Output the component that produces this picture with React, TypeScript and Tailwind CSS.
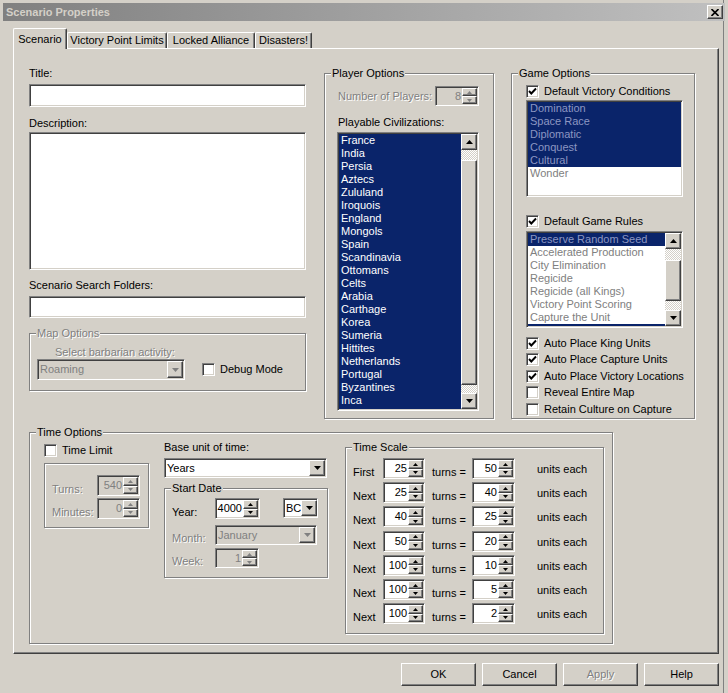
import React from 'react';

// classic win2k bevels
const SUNKEN =
  'border border-t-[#808080] border-l-[#808080] border-b-white border-r-white shadow-[inset_1px_1px_0_#404040,inset_-1px_-1px_0_#d4d0c8]';
const RAISED =
  'border border-t-white border-l-white border-b-[#404040] border-r-[#404040] shadow-[inset_-1px_-1px_0_#808080]';
const ETCHED = 'border border-[#808080] shadow-[inset_1px_1px_0_#fff,1px_1px_0_#fff]';
const DIS = 'text-[#808080] [text-shadow:1px_1px_0_#fff]';
const DITHER = 'bg-[repeating-conic-gradient(#fff_0%_25%,#d4d0c8_0%_50%)] bg-[length:2px_2px]';

function Arrow({ dir, big, disabled }: { dir: 'up' | 'down'; big?: boolean; disabled?: boolean }) {
  const fill = disabled ? '#808080' : '#000';
  if (big) {
    return (
      <svg width="7" height="4" viewBox="0 0 7 4">
        <path d={dir === 'up' ? 'M0 4 L3.5 0 L7 4Z' : 'M0 0 L7 0 L3.5 4Z'} fill={fill} />
      </svg>
    );
  }
  return (
    <svg width="5" height="3" viewBox="0 0 5 3">
      <path d={dir === 'up' ? 'M0 3 L2.5 0 L5 3Z' : 'M0 0 L5 0 L2.5 3Z'} fill={fill} />
    </svg>
  );
}

function Spin({ value, className, disabled }: { value: string; className: string; disabled?: boolean }) {
  return (
    <div className={`${SUNKEN} ${className} flex p-[1px] ${disabled ? 'bg-[#d4d0c8]' : 'bg-white'}`}>
      <span className={`flex-1 self-center text-right pr-[1px] ${disabled ? 'text-[#808080]' : ''}`}>{value}</span>
      <div className="flex flex-col w-[15px]">
        <div className={`flex-1 ${RAISED} bg-[#d4d0c8] flex items-center justify-center`}>
          <Arrow dir="up" disabled={disabled} />
        </div>
        <div className={`flex-1 ${RAISED} bg-[#d4d0c8] flex items-center justify-center`}>
          <Arrow dir="down" disabled={disabled} />
        </div>
      </div>
    </div>
  );
}

function Combo({ value, className, disabled }: { value: string; className: string; disabled?: boolean }) {
  return (
    <div className={`${SUNKEN} ${className} flex p-[1px] ${disabled ? 'bg-[#d4d0c8]' : 'bg-white'}`}>
      <span className={`flex-1 self-center pl-[1px] whitespace-nowrap ${disabled ? 'text-[#808080]' : ''}`}>{value}</span>
      <div className={`w-[16px] shrink-0 ${RAISED} bg-[#d4d0c8] flex items-center justify-center`}>
        <Arrow dir="down" big disabled={disabled} />
      </div>
    </div>
  );
}

function Check({ label, checked }: { label: string; checked?: boolean }) {
  return (
    <div className="flex items-center gap-[5px] h-[13px]">
      <span className={`w-[13px] h-[13px] shrink-0 ${SUNKEN} bg-white flex items-center justify-center`}>
        {checked && (
          <svg width="9" height="9" viewBox="0 0 9 9">
            <path d="M1 4 L3.3 6.5 L8 1.5" fill="none" stroke="#000" strokeWidth="1.9" />
          </svg>
        )}
      </span>
      <span className="whitespace-nowrap">{label}</span>
    </div>
  );
}

function Group({
  label,
  className,
  children,
  disabled,
}: {
  label?: string;
  className: string;
  children?: React.ReactNode;
  disabled?: boolean;
}) {
  return (
    <fieldset className={`${ETCHED} p-0 m-0 min-w-0 ${className}`}>
      {label && (
        <legend className={`ml-[6px] px-[1px] leading-[13px] bg-[#d4d0c8] ${disabled ? DIS : ''}`}>{label}</legend>
      )}
      {children}
    </fieldset>
  );
}

function ScrollBar({ topCls, thumbCls }: { topCls: string; thumbCls: string }) {
  return (
    <div className="w-[16px] flex flex-col shrink-0">
      <div className={`h-[16px] ${RAISED} bg-[#d4d0c8] flex items-center justify-center`}>
        <Arrow dir="up" big />
      </div>
      <div className={`${topCls} ${DITHER}`} />
      <div className={`${thumbCls} ${RAISED} bg-[#d4d0c8]`} />
      <div className={`flex-1 ${DITHER}`} />
      <div className={`h-[16px] ${RAISED} bg-[#d4d0c8] flex items-center justify-center`}>
        <Arrow dir="down" big />
      </div>
    </div>
  );
}

const CIVS = [
  'France', 'India', 'Persia', 'Aztecs', 'Zululand', 'Iroquois', 'England', 'Mongols', 'Spain',
  'Scandinavia', 'Ottomans', 'Celts', 'Arabia', 'Carthage', 'Korea', 'Sumeria', 'Hittites',
  'Netherlands', 'Portugal', 'Byzantines', 'Inca',
];

const VICTORY = [
  { name: 'Domination', sel: true },
  { name: 'Space Race', sel: true },
  { name: 'Diplomatic', sel: true },
  { name: 'Conquest', sel: true },
  { name: 'Cultural', sel: true },
  { name: 'Wonder', sel: false },
];

const RULES = [
  { name: 'Preserve Random Seed', sel: true },
  { name: 'Accelerated Production', sel: false },
  { name: 'City Elimination', sel: false },
  { name: 'Regicide', sel: false },
  { name: 'Regicide (all Kings)', sel: false },
  { name: 'Victory Point Scoring', sel: false },
  { name: 'Capture the Unit', sel: false },
];

const SCALE = [
  ['First', '25', '50'],
  ['Next', '25', '40'],
  ['Next', '40', '25'],
  ['Next', '50', '20'],
  ['Next', '100', '10'],
  ['Next', '100', '5'],
  ['Next', '100', '2'],
];

const TABS = [
  { label: 'Scenario', w: 'w-[54px]', active: true },
  { label: 'Victory Point Limits', w: 'w-[100px]', active: false },
  { label: 'Locked Alliance', w: 'w-[88px]', active: false },
  { label: 'Disasters!', w: 'w-[57px]', active: false },
];

function LeftColumn() {
  return (
    <div className="w-[277px] flex flex-col">
      <span>Title:</span>
      <div className={`${SUNKEN} bg-white mt-[4px] h-[23px]`} />
      <span className="mt-[10px]">Description:</span>
      <div className={`${SUNKEN} bg-white mt-[2px] h-[138px]`} />
      <span className="mt-[9px]">Scenario Search Folders:</span>
      <div className={`${SUNKEN} bg-white mt-[4px] h-[22px]`} />
      <Group label="Map Options" disabled className="mt-[9px] h-[64px]">
        <div className="pl-[7px] pt-[6px]">
          <div className={`ml-[18px] ${DIS}`}>Select barbarian activity:</div>
          <div className="flex items-center">
            <Combo value="Roaming" disabled className="w-[148px] h-[21px]" />
            <div className="ml-[17px]">
              <Check label="Debug Mode" />
            </div>
          </div>
        </div>
      </Group>
    </div>
  );
}

function PlayerOptions() {
  return (
    <Group label="Player Options" className="ml-[18px] w-[170px] h-[352px]">
      <div className="pl-[13px] pr-[14px]">
        <div className="mt-[6px] flex items-center h-[20px]">
          <span className={DIS}>Number of Players:</span>
          <Spin value="8" disabled className="ml-auto w-[44px] h-[20px]" />
        </div>
        <div className="mt-[10px]">Playable Civilizations:</div>
      </div>
      <div className={`ml-[12px] mt-[3px] w-[142px] h-[279px] ${SUNKEN} bg-white flex p-[1px]`}>
        <div className="flex-1 overflow-hidden bg-[#0a246a]">
          {CIVS.map((c) => (
            <div key={c} className="h-[13px] leading-[13px] pl-[2px] text-white">
              {c}
            </div>
          ))}
        </div>
        <ScrollBar topCls="h-[10px]" thumbCls="h-[225px]" />
      </div>
    </Group>
  );
}

function GameOptions() {
  return (
    <Group label="Game Options" className="ml-[17px] w-[184px] h-[352px]">
      <div className="pl-[14px]">
        <div className="mt-[5px]">
          <Check label="Default Victory Conditions" checked />
        </div>
        <div className={`mt-[2px] w-[157px] h-[97px] ${SUNKEN} bg-white p-[1px] overflow-hidden`}>
          {VICTORY.map((v) => (
            <div
              key={v.name}
              className={`h-[13px] leading-[13px] pl-[2px] ${v.sel ? 'bg-[#0a246a] text-[#8c96c2]' : 'text-[#808080]'}`}
            >
              {v.name}
            </div>
          ))}
        </div>
        <div className="mt-[18px]">
          <Check label="Default Game Rules" checked />
        </div>
        <div className={`mt-[3px] w-[157px] h-[97px] ${SUNKEN} bg-white flex p-[1px]`}>
          <div className="flex-1 overflow-hidden">
            {RULES.map((r) => (
              <div
                key={r.name}
                className={`h-[13px] leading-[13px] pl-[2px] whitespace-nowrap ${r.sel ? 'bg-[#0a246a] text-[#8c96c2]' : 'text-[#808080]'}`}
              >
                {r.name}
              </div>
            ))}
            <div className="h-[13px] bg-[#0a246a]" />
          </div>
          <ScrollBar topCls="h-[11px]" thumbCls="h-[41px]" />
        </div>
        <div className="mt-[7px] flex flex-col">
          {[
            ['Auto Place King Units', true],
            ['Auto Place Capture Units', true],
            ['Auto Place Victory Locations', true],
            ['Reveal Entire Map', false],
            ['Retain Culture on Capture', false],
          ].map(([l, c]) => (
            <div key={l as string} className="h-[16.5px] flex items-center">
              <Check label={l as string} checked={c as boolean} />
            </div>
          ))}
        </div>
      </div>
    </Group>
  );
}

function TimeOptions() {
  return (
    <Group label="Time Options" className="mt-[7px] w-[584px] h-[218px]">
      <div className="flex items-start pl-[14px]">
        {/* time limit */}
        <div className="w-[105px] pt-[5px]">
          <Check label="Time Limit" />
          <div className={`mt-[6px] h-[65px] ${ETCHED} pl-[7px] pt-[11px]`}>
            <div className="flex items-end h-[21px]">
              <span className={`w-[45px] ${DIS}`}>Turns:</span>
              <Spin value="540" disabled className="w-[43px] h-[21px]" />
            </div>
            <div className="flex items-end h-[21px] mt-[2px]">
              <span className={`w-[45px] ${DIS}`}>Minutes:</span>
              <Spin value="0" disabled className="w-[43px] h-[21px]" />
            </div>
          </div>
        </div>

        {/* base unit + start date */}
        <div className="ml-[15px] w-[164px] pt-[2px] flex flex-col">
          <span>Base unit of time:</span>
          <Combo value="Years" className="mt-[4px] w-[163px] h-[20px]" />
          <Group label="Start Date" className="mt-[4px] w-[164px] h-[96px]">
            <div className="pl-[7px] pt-[3px]">
              <div className="flex items-end h-[21px]">
                <span className="w-[43px]">Year:</span>
                <Spin value="4000" className="w-[45px] h-[21px]" />
                <Combo value="BC" className="ml-[23px] self-start w-[35px] h-[20px]" />
              </div>
              <div className="flex items-end h-[20px] mt-[6px]">
                <span className={`w-[43px] ${DIS}`}>Month:</span>
                <Combo value="January" disabled className="w-[102px] h-[20px]" />
              </div>
              <div className="flex items-end h-[20px] mt-[3px]">
                <span className={`w-[43px] ${DIS}`}>Week:</span>
                <Spin value="1" disabled className="w-[44px] h-[20px]" />
              </div>
            </div>
          </Group>
        </div>

        {/* time scale */}
        <Group label="Time Scale" className="ml-[17px] mt-[2px] w-[259px] h-[193px]">
          <div className="pl-[7px] pt-[4px] flex flex-col gap-[3.2px]">
            {SCALE.map(([lbl, turns, units], i) => (
              <div key={i} className="flex items-end h-[21px]">
                <span className="w-[30px]">{lbl}</span>
                <Spin value={turns} className="w-[42px] h-[21px]" />
                <span className="ml-[7px] w-[40px]">turns =</span>
                <Spin value={units} className="w-[43px] h-[21px]" />
                <span className="ml-[22px] pb-[3px]">units each</span>
              </div>
            ))}
          </div>
        </Group>
      </div>
    </Group>
  );
}

export default function App() {
  return (
    <div className="w-[728px] h-[693px] bg-[#d4d0c8] text-black text-[11px] leading-[13px] font-['Liberation_Sans',Arial,sans-serif] overflow-hidden pl-[3px] pt-[3px] shadow-[inset_-4px_0_0_#d4d0c8,inset_-5px_0_0_#808080]">
      {/* title bar */}
      <div className="w-[722px] h-[18px] bg-[linear-gradient(to_right,#808080,#c0c0c0)] flex items-center pl-[3px] pr-[2px]">
        <span className="font-bold text-[#d4d0c8]">Scenario Properties</span>
        <div className={`ml-auto w-[16px] h-[14px] ${RAISED} bg-[#d4d0c8] flex items-center justify-center`}>
          <svg width="8" height="7" viewBox="0 0 8 7">
            <path d="M0.5 0 L7.5 7 M7.5 0 L0.5 7" stroke="#000" strokeWidth="1.6" />
          </svg>
        </div>
      </div>

      {/* tabs */}
      <div className="ml-[10px] mt-[7px] h-[20px] flex items-end relative z-10">
        {TABS.map((t) => (
          <div
            key={t.label}
            className={`${t.w} flex justify-center border-t border-l border-r border-t-white border-l-white border-r-[#404040] shadow-[inset_-1px_0_0_#808080] rounded-tl-[2px] rounded-tr-[2px] bg-[#d4d0c8] ${
              t.active ? 'h-[21px] -mb-[1px] pt-[4px]' : 'h-[16px] pt-[1px]'
            }`}
          >
            <span className="whitespace-nowrap">{t.label}</span>
          </div>
        ))}
      </div>

      {/* page */}
      <div
        className={`ml-[10px] w-[706px] h-[606px] bg-[#d4d0c8] border border-t-white border-l-white border-b-[#404040] border-r-[#404040] shadow-[inset_-1px_-1px_0_#808080] pl-[15px] pt-[18px]`}
      >
        <div className="flex items-start">
          <LeftColumn />
          <PlayerOptions />
          <GameOptions />
        </div>
        <TimeOptions />
      </div>

      {/* buttons */}
      <div className="ml-[10px] w-[706px] mt-[9px] flex justify-end gap-[6px]">
        {['OK', 'Cancel', 'Apply', 'Help'].map((b) => (
          <div
            key={b}
            className={`w-[75px] h-[23px] ${RAISED} bg-[#d4d0c8] flex items-center justify-center ${b === 'Apply' ? DIS : ''}`}
          >
            {b}
          </div>
        ))}
      </div>
    </div>
  );
}
